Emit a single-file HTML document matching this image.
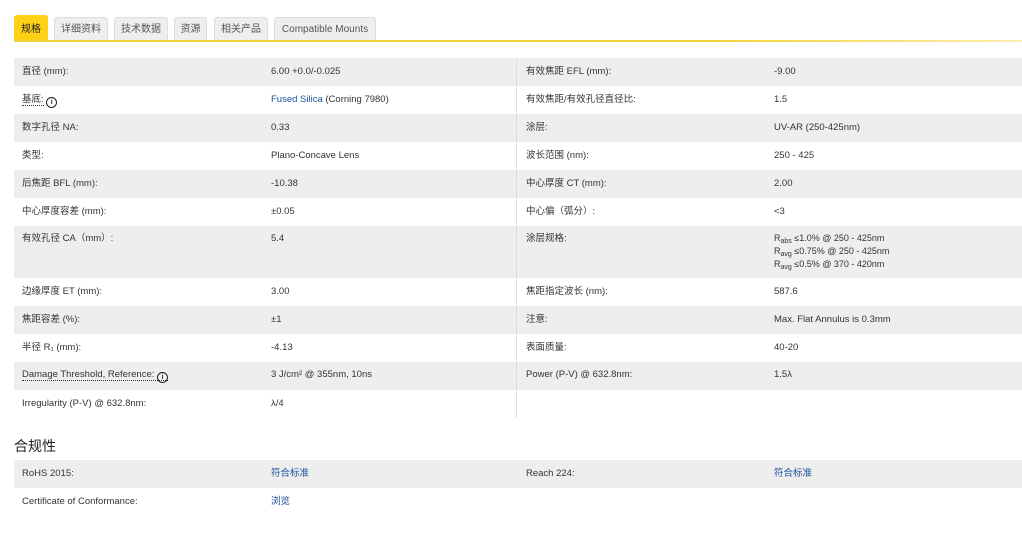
<!DOCTYPE html>
<html><head><meta charset="utf-8"><style>
body{margin:0;width:1022px;height:540px;background:#fff;font-family:"Liberation Sans","Noto Sans CJK SC",sans-serif;font-size:9.5px;color:#333;position:relative;overflow:hidden}
.tab{position:absolute;top:17px;height:24px;background:#eee;border:1px solid #ddd;border-bottom:none;border-radius:3px 3px 0 0;box-sizing:border-box;font-size:10px;color:#555;text-align:center;line-height:24px}
.tab.on{background:#fcd116;border-color:#fcd116;color:#222;top:15px;height:26px;line-height:28px}
.yl{position:absolute;top:40px;left:14px;width:1008px;height:2px;background:linear-gradient(90deg,#f5d33a 70%,#fbeeb0)}
.r{position:absolute;height:28px}
.g{background:#eee}
.t{position:absolute;white-space:nowrap;line-height:14px;height:14px}
.div{position:absolute;left:516px;top:58px;width:1px;height:360px;background:#ddd}
a{color:#1a4f9c;text-decoration:none}
.i{display:inline-block;width:9px;height:9px;border:1.3px solid #222;border-radius:50%;font-size:7px;line-height:9px;text-align:center;font-weight:bold;vertical-align:-2px}
.u{border-bottom:1px dotted #333}
sub{font-size:7px;line-height:0;vertical-align:-2px}
</style></head><body>
<div class="tab on" style="left:14px;width:34px">规格</div>
<div class="tab" style="left:54px;width:54px">详细资料</div>
<div class="tab" style="left:114px;width:54px">技术数据</div>
<div class="tab" style="left:174px;width:33px">资源</div>
<div class="tab" style="left:214px;width:54px">相关产品</div>
<div class="tab" style="left:274px;width:102px">Compatible Mounts</div>
<div class="yl"></div>

<div class="r g" style="left:14px;width:1008px;top:58px"></div>
<div class="r g" style="left:14px;width:1008px;top:114px"></div>
<div class="r g" style="left:14px;width:1008px;top:170px"></div>
<div class="r g" style="left:14px;width:1008px;top:226px;height:52px"></div>
<div class="r g" style="left:14px;width:1008px;top:306px"></div>
<div class="r g" style="left:14px;width:1008px;top:362px"></div>
<div class="div"></div>

<div class="t" style="left:22px;top:65px">直径 (mm):</div><div class="t" style="left:271px;top:65px">6.00 +0.0/-0.025</div>
<div class="t" style="left:526px;top:65px">有效焦距 EFL (mm):</div><div class="t" style="left:774px;top:65px">-9.00</div>
<div class="t" style="left:22px;top:93px"><span class="u">基底:</span> <span class="i">i</span></div><div class="t" style="left:271px;top:93px"><a>Fused Silica</a> (Corning 7980)</div>
<div class="t" style="left:526px;top:93px">有效焦距/有效孔径直径比:</div><div class="t" style="left:774px;top:93px">1.5</div>
<div class="t" style="left:22px;top:121px">数字孔径 NA:</div><div class="t" style="left:271px;top:121px">0.33</div>
<div class="t" style="left:526px;top:121px">涂层:</div><div class="t" style="left:774px;top:121px">UV-AR (250-425nm)</div>
<div class="t" style="left:22px;top:149px">类型:</div><div class="t" style="left:271px;top:149px">Plano-Concave Lens</div>
<div class="t" style="left:526px;top:149px">波长范围 (nm):</div><div class="t" style="left:774px;top:149px">250 - 425</div>
<div class="t" style="left:22px;top:177px">后焦距 BFL (mm):</div><div class="t" style="left:271px;top:177px">-10.38</div>
<div class="t" style="left:526px;top:177px">中心厚度 CT (mm):</div><div class="t" style="left:774px;top:177px">2.00</div>
<div class="t" style="left:22px;top:205px">中心厚度容差 (mm):</div><div class="t" style="left:271px;top:205px">±0.05</div>
<div class="t" style="left:526px;top:205px">中心偏（弧分）:</div><div class="t" style="left:774px;top:205px">&lt;3</div>
<div class="t" style="left:22px;top:232px">有效孔径 CA（mm）:</div><div class="t" style="left:271px;top:232px">5.4</div>
<div class="t" style="left:526px;top:232px">涂层规格:</div>
<div class="t" style="left:774px;top:232px;font-size:9px;line-height:13px;height:39px">R<sub>abs</sub> ≤1.0% @ 250 - 425nm<br>R<sub>avg</sub> ≤0.75% @ 250 - 425nm<br>R<sub>avg</sub> ≤0.5% @ 370 - 420nm</div>
<div class="t" style="left:22px;top:285px">边缘厚度 ET (mm):</div><div class="t" style="left:271px;top:285px">3.00</div>
<div class="t" style="left:526px;top:285px">焦距指定波长 (nm):</div><div class="t" style="left:774px;top:285px">587.6</div>
<div class="t" style="left:22px;top:313px">焦距容差 (%):</div><div class="t" style="left:271px;top:313px">±1</div>
<div class="t" style="left:526px;top:313px">注意:</div><div class="t" style="left:774px;top:313px">Max. Flat Annulus is 0.3mm</div>
<div class="t" style="left:22px;top:341px">半径 R₁ (mm):</div><div class="t" style="left:271px;top:341px">-4.13</div>
<div class="t" style="left:526px;top:341px">表面质量:</div><div class="t" style="left:774px;top:341px">40-20</div>
<div class="t" style="left:22px;top:368px"><span class="u">Damage Threshold, Reference: <span class="i">i</span></span></div><div class="t" style="left:271px;top:368px">3 J/cm² @ 355nm, 10ns</div>
<div class="t" style="left:526px;top:368px">Power (P-V) @ 632.8nm:</div><div class="t" style="left:774px;top:368px">1.5λ</div>
<div class="t" style="left:22px;top:397px">Irregularity (P-V) @ 632.8nm:</div><div class="t" style="left:271px;top:397px">λ/4</div>

<div class="t" style="left:14px;top:437px;font-size:14px;line-height:18px;height:18px;color:#222">合规性</div>
<div class="r g" style="left:14px;width:1008px;top:460px"></div>
<div class="t" style="left:22px;top:467px">RoHS 2015:</div><div class="t" style="left:271px;top:467px"><a>符合标准</a></div>
<div class="t" style="left:526px;top:467px">Reach 224:</div><div class="t" style="left:774px;top:467px"><a>符合标准</a></div>
<div class="t" style="left:22px;top:495px">Certificate of Conformance:</div><div class="t" style="left:271px;top:495px"><a>浏览</a></div>
</body></html>
